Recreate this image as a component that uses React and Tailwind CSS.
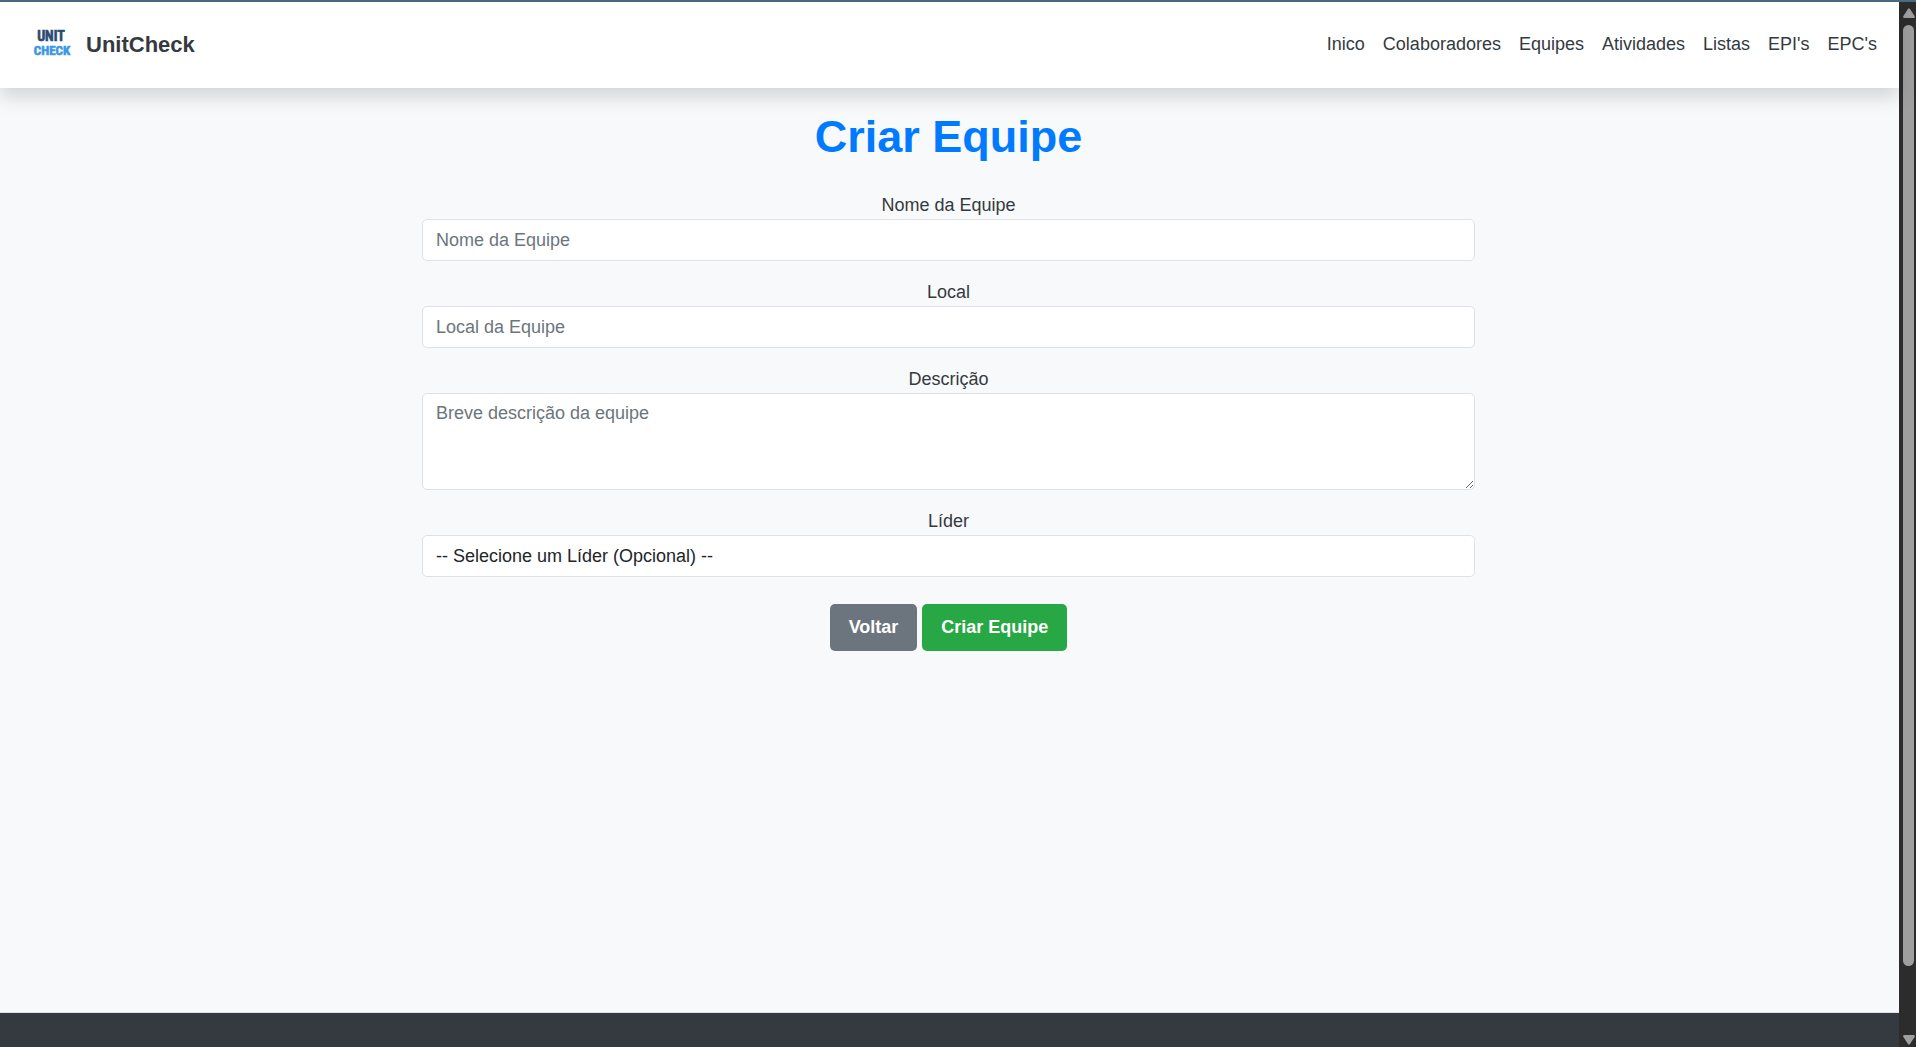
import React from "react";

const links = ["Inico", "Colaboradores", "Equipes", "Atividades", "Listas", "EPI's", "EPC's"];

const control =
  "block w-full rounded-[5px] border border-[#dee2e6] bg-white px-[13px] text-[18px] leading-[27px] text-[#212529] placeholder:text-[#6c757d] placeholder:opacity-100 focus:border-[#86b7fe] focus:outline-none";

function Field({ id, label, children }) {
  return (
    <div className="mb-[18px]">
      <label htmlFor={id} className="block text-center">
        {label}
      </label>
      {children}
    </div>
  );
}

function Logo() {
  return (
    <svg viewBox="0 0 38 36" className="h-9 w-[38px]" role="img" aria-label="Unit Check">
      <g textAnchor="middle" fontFamily="'Roboto Condensed', Roboto, sans-serif" fontWeight="700" strokeWidth="0.6">
        <text x="18" y="15" fontSize="14" fill="#2c4a73" stroke="#2c4a73">
          UNIT
        </text>
        <text x="19" y="29" fontSize="13" fill="#3b97e3" stroke="#3b97e3">
          CHECK
        </text>
      </g>
    </svg>
  );
}

function Header() {
  return (
    <header className="z-10 flex h-[86px] shrink-0 items-center justify-between bg-white pr-[22px] pb-[2px] pl-[33px] shadow-[0_9px_18px_rgba(0,0,0,0.15)]">
      <a href="#" className="flex items-center gap-[15px] text-[22px] font-bold">
        <Logo />
        UnitCheck
      </a>
      <nav className="flex gap-[18px]">
        {links.map((l) => (
          <a key={l} href="#">
            {l}
          </a>
        ))}
      </nav>
    </header>
  );
}

function Scrollbar() {
  return (
    <div aria-hidden="true" className="flex w-[17px] shrink-0 flex-col items-center bg-[#2c2c2c] pt-[6px] pb-[2px] pl-[2px]">
      <svg viewBox="0 0 12 10" className="h-[10px] w-3" fill="#9f9f9f">
        <path d="M5 1 Q6 -0.5 7 1 L11.6 8 Q12.4 10 10.6 10 H1.4 Q-0.4 10 0.4 8 Z" />
      </svg>
      <div className="mt-[7px] mb-1 w-full flex-1 px-[2px]">
        <div className="h-[93.5%] rounded-full bg-[#9f9f9f]" />
      </div>
      <svg viewBox="0 0 12 10" className="h-[10px] w-3" fill="#9f9f9f">
        <path d="M5 9 Q6 10.5 7 9 L11.6 2 Q12.4 0 10.6 0 H1.4 Q-0.4 0 0.4 2 Z" />
      </svg>
    </div>
  );
}

export default function App() {
  return (
    <div className="flex h-screen flex-col overflow-hidden font-['Liberation_Sans',Arial,sans-serif] text-[18px] leading-[27px] text-[#343a40]">
      <div className="h-[2px] shrink-0 bg-[#4a6b80]" />
      <div className="flex min-h-0 flex-1">
        <div className="flex min-w-0 flex-1 flex-col bg-[#f8f9fb]">
          <Header />
          <main className="flex-1 pt-[22px] pr-[26px] pl-6">
            <form className="mx-auto w-full max-w-[1053px]" onSubmit={(e) => e.preventDefault()}>
              <h1 className="mb-7 text-center text-[45px] leading-[54px] font-bold text-[#007bff]">Criar Equipe</h1>
              <Field id="nome" label="Nome da Equipe">
                <input id="nome" type="text" placeholder="Nome da Equipe" className={control + " h-[42px]"} />
              </Field>
              <Field id="local" label="Local">
                <input id="local" type="text" placeholder="Local da Equipe" className={control + " h-[42px]"} />
              </Field>
              <Field id="descricao" label="Descrição">
                <textarea
                  id="descricao"
                  placeholder="Breve descrição da equipe"
                  className={control + " h-[97px] resize-y py-[6px]"}
                />
              </Field>
              <Field id="lider" label="Líder">
                <select id="lider" className={control + " h-[42px] appearance-none"}>
                  <option>-- Selecione um Líder (Opcional) --</option>
                </select>
              </Field>
              <div className="flex justify-center gap-[5px] pt-[9px] font-bold text-white">
                <button type="button" className="rounded-[5px] bg-[#6c757d] px-[19px] py-[10px]">
                  Voltar
                </button>
                <button type="submit" className="rounded-[5px] bg-[#28a745] px-[19px] py-[10px]">
                  Criar Equipe
                </button>
              </div>
            </form>
          </main>
          <footer className="h-[35px] shrink-0 border-t border-[#dee2e6] bg-[#343a40]" />
        </div>
        <Scrollbar />
      </div>
    </div>
  );
}
